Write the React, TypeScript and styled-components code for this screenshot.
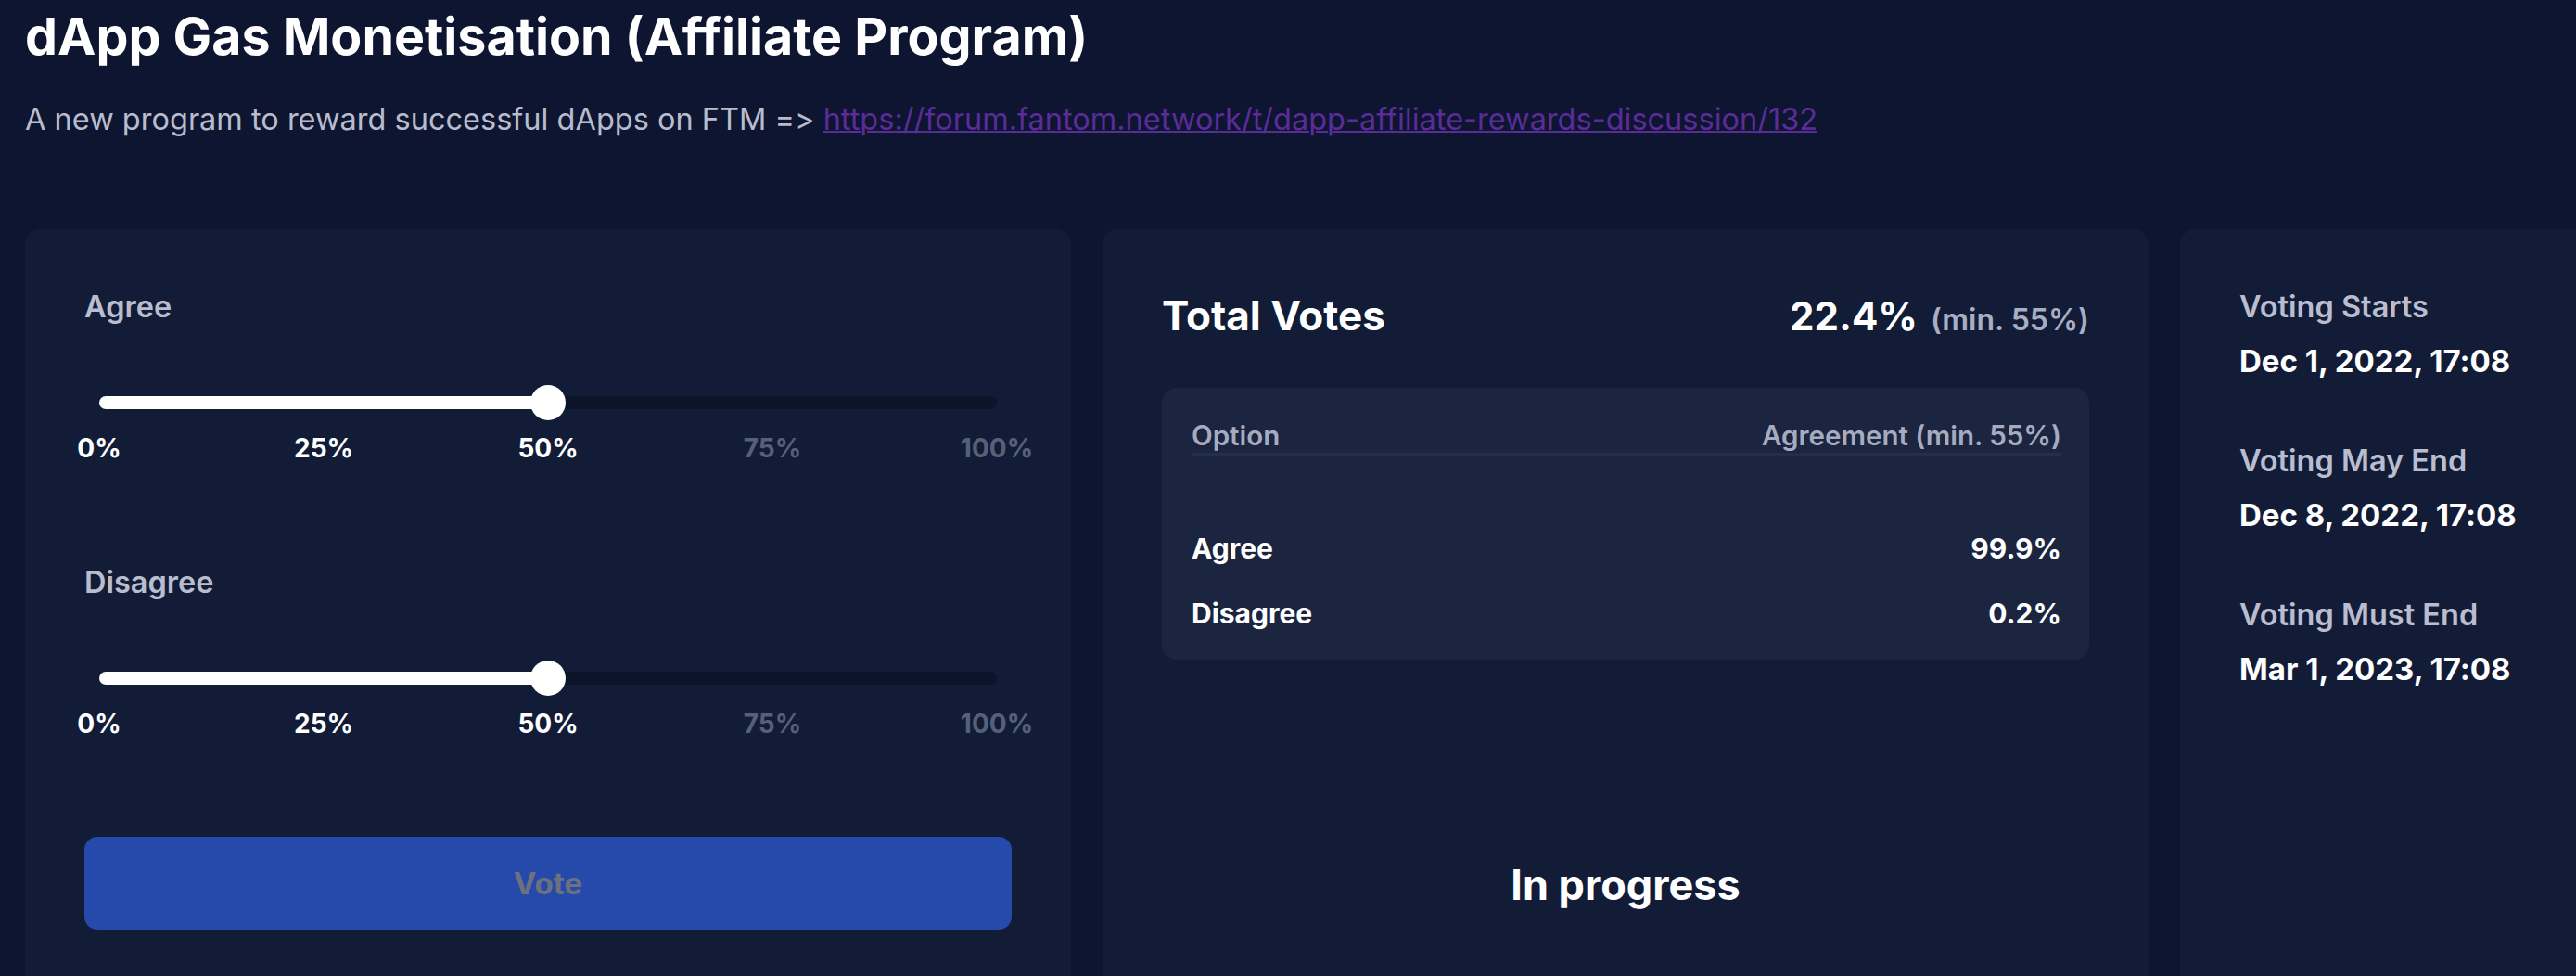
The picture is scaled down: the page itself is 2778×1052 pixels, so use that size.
import React from "react";
import styled, { createGlobalStyle } from "styled-components";

const Global = createGlobalStyle`
  html, body { margin: 0; padding: 0; background: #0d1530; overflow: hidden; }
  body {
    font-family: Inter, Lato, "Noto Sans", sans-serif;
    font-feature-settings: "calt" 0, "liga" 0;
    font-variant-ligatures: none;
    color: #ffffff;
  }
  * { box-sizing: border-box; }
`;

const Page = styled.main`
  width: 2778px;
  height: 1052px;
  overflow: hidden;
  padding-left: 27px;
`;

const Title = styled.h1`
  margin: 0;
  padding-top: 6px;
  font-size: 55.5px;
  line-height: 66px;
  font-weight: 700;
  color: #ffffff;
  white-space: nowrap;
`;

const Subtitle = styled.p`
  margin: 37px 0 0;
  font-size: 32.5px;
  line-height: 40px;
  color: #b8bccc;
  white-space: nowrap;
`;

const Link = styled.a`
  color: #5a2c98;
  text-decoration: underline;
  text-decoration-thickness: 2px;
`;

const CardRow = styled.div`
  display: flex;
  gap: 34px;
  margin-top: 98px;
`;

const Card = styled.section`
  flex: 0 0 1128px;
  height: 900px;
  background: #121c37;
  border-radius: 16px;
  padding: 64px;
  display: flex;
  flex-direction: column;
`;

/* ---------- Vote card ---------- */

const SliderGroup = styled.div<{ $gap?: number }>`
  display: flex;
  flex-direction: column;
  margin-top: ${(p) => p.$gap ?? 0}px;
`;

const FieldLabel = styled.div`
  font-size: 32.5px;
  line-height: 40px;
  font-weight: 600;
  color: #b9bdcf;
  white-space: nowrap;
`;

const TrackArea = styled.div`
  margin-top: 63px;
  padding: 0 16px;
  height: 40px;
  display: flex;
  align-items: center;
`;

const Track = styled.div`
  position: relative;
  flex: 1;
  height: 14px;
  border-radius: 7px;
  background: #0c1429;
`;

const Fill = styled.div`
  height: 100%;
  border-radius: 7px;
  background: #ffffff;
`;

const Thumb = styled.div`
  position: absolute;
  top: 50%;
  width: 38px;
  height: 38px;
  margin: -19px 0 0 -19px;
  border-radius: 50%;
  background: #ffffff;
`;

const Ticks = styled.div`
  margin-top: 11px;
  padding: 0 16px;
  display: flex;
  justify-content: space-between;
`;

const Tick = styled.span<{ $active: boolean }>`
  width: 0;
  display: flex;
  justify-content: center;
  white-space: nowrap;
  font-size: 28px;
  line-height: 36px;
  font-weight: 700;
  color: ${(p) => (p.$active ? "#ffffff" : "#566079")};
`;

const VoteButton = styled.button`
  margin-top: 104px;
  width: 100%;
  height: 100px;
  border: none;
  border-radius: 14px;
  background: #254aab;
  color: #6d717f;
  font-family: inherit;
  font-size: 33px;
  font-weight: 700;
`;

/* ---------- Results card ---------- */

const ResultHead = styled.div`
  display: flex;
  justify-content: space-between;
  align-items: baseline;
`;

const BigText = styled.span<{ $size: number }>`
  font-size: ${(p) => p.$size}px;
  line-height: 58px;
  font-weight: 700;
  color: #ffffff;
`;

const MinText = styled.span`
  margin-left: 14px;
  font-size: 32px;
  font-weight: 600;
  color: #a9aec2;
`;

const TableBox = styled.div`
  margin-top: 48px;
  background: #1b2540;
  border-radius: 16px;
  padding: 32px 30px 31px 32px;
  display: flex;
  flex-direction: column;
`;

const TableHead = styled.div`
  display: flex;
  justify-content: space-between;
  font-size: 29.5px;
  line-height: 38px;
  font-weight: 600;
  color: #a6abbf;
  border-bottom: 3px solid #232e4b;
`;

const TableRow = styled.div<{ $gap: number }>`
  margin-top: ${(p) => p.$gap}px;
  display: flex;
  justify-content: space-between;
  font-size: 30px;
  line-height: 38px;
  font-weight: 700;
  color: #ffffff;
`;

const Status = styled.div`
  margin-top: 214px;
  text-align: center;
  font-size: 45px;
  line-height: 58px;
  font-weight: 700;
`;

/* ---------- Dates card ---------- */

const DateItem = styled.div<{ $gap: number }>`
  margin-top: ${(p) => p.$gap}px;
  display: flex;
  flex-direction: column;
  gap: 16px;
`;

const DateValue = styled.div`
  font-size: 33px;
  line-height: 44px;
  font-weight: 700;
  color: #ffffff;
  white-space: nowrap;
`;

const ticks = [0, 25, 50, 75, 100];

function Slider({ label, value, gap }: { label: string; value: number; gap?: number }) {
  return (
    <SliderGroup $gap={gap}>
      <FieldLabel>{label}</FieldLabel>
      <TrackArea>
        <Track>
          <Fill style={{ width: `${value}%` }} />
          <Thumb style={{ left: `${value}%` }} />
        </Track>
      </TrackArea>
      <Ticks>
        {ticks.map((t) => (
          <Tick key={t} $active={t <= value}>
            {t}%
          </Tick>
        ))}
      </Ticks>
    </SliderGroup>
  );
}

const dates = [
  { label: "Voting Starts", value: "Dec 1, 2022, 17:08" },
  { label: "Voting May End", value: "Dec 8, 2022, 17:08" },
  { label: "Voting Must End", value: "Mar 1, 2023, 17:08" },
];

export default function App() {
  return (
    <>
      <Global />
      <Page>
        <Title>dApp Gas Monetisation (Affiliate Program)</Title>
        <Subtitle>
          A new program to reward successful dApps on FTM =&gt;{" "}
          <Link href="#">https://forum.fantom.network/t/dapp-affiliate-rewards-discussion/132</Link>
        </Subtitle>
        <CardRow>
          <Card>
            <Slider label="Agree" value={50} />
            <Slider label="Disagree" value={50} gap={107} />
            <VoteButton>Vote</VoteButton>
          </Card>
          <Card>
            <ResultHead>
              <BigText $size={44}>Total Votes</BigText>
              <span>
                <BigText $size={42}>22.4%</BigText>
                <MinText>(min. 55%)</MinText>
              </span>
            </ResultHead>
            <TableBox>
              <TableHead>
                <span>Option</span>
                <span>Agreement (min. 55%)</span>
              </TableHead>
              <TableRow $gap={81}>
                <span>Agree</span>
                <span>99.9%</span>
              </TableRow>
              <TableRow $gap={32}>
                <span>Disagree</span>
                <span>0.2%</span>
              </TableRow>
            </TableBox>
            <Status>In progress</Status>
          </Card>
          <Card>
            {dates.map((d, i) => (
              <DateItem key={d.label} $gap={i === 0 ? 0 : 66}>
                <FieldLabel>{d.label}</FieldLabel>
                <DateValue>{d.value}</DateValue>
              </DateItem>
            ))}
          </Card>
        </CardRow>
      </Page>
    </>
  );
}
